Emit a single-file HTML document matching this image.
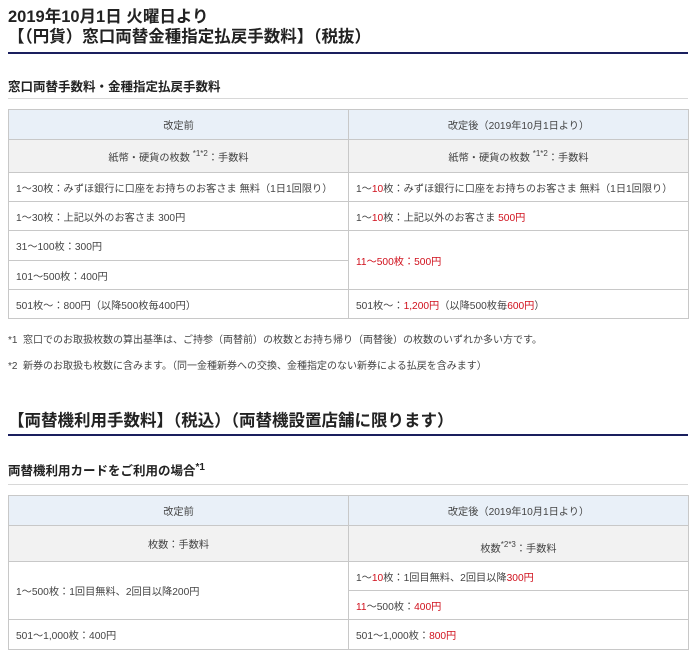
<!DOCTYPE html>
<html><head><meta charset="utf-8"><style>
*{margin:0;padding:0;box-sizing:border-box}
body{width:700px;height:664px;background:#fff;font-family:"Liberation Sans","Noto Sans CJK JP",sans-serif;color:#333;position:relative;overflow:hidden}
.a{position:absolute;white-space:nowrap}
.h1{font-size:16.5px;font-weight:bold;color:#222;left:8px}
.rule{position:absolute;left:8px;width:680px;height:2px;background:#1a1f5e}
.grey{position:absolute;left:8px;width:680px;height:1px;background:#d8d8d8}
.h2{font-size:12.5px;font-weight:bold;color:#222;left:8px}
table{position:absolute;left:8px;width:680px;border-collapse:collapse;font-size:10.2px;color:#444;table-layout:fixed}
td{border:1px solid #c8c8c8;padding:0 7px;vertical-align:middle;white-space:nowrap;overflow:hidden}
tr.hd td{background:#e9f0f8;text-align:center}
tr.sh td{background:#f2f2f2;text-align:center}
.r{color:#d0101c}
sup{font-size:8px;vertical-align:5px;line-height:0}
.fn{font-size:10px;color:#444;left:8px}
</style></head><body>
<div class="a h1" style="top:3px">2019年10月1日 火曜日より</div>
<div class="a h1" style="top:23px">【（円貨）窓口両替金種指定払戻手数料】（税抜）</div>
<div class="rule" style="top:52px"></div>
<div class="a h2" style="top:76px">窓口両替手数料・金種指定払戻手数料</div>
<div class="grey" style="top:98px"></div>
<table style="top:109px">
<colgroup><col style="width:340px"><col style="width:340px"></colgroup>
<tr class="hd" style="height:30px"><td>改定前</td><td>改定後（2019年10月1日より）</td></tr>
<tr class="sh" style="height:33px"><td>紙幣・硬貨の枚数 <sup>*1*2</sup>：手数料</td><td>紙幣・硬貨の枚数 <sup>*1*2</sup>：手数料</td></tr>
<tr style="height:29px"><td>1～30枚：みずほ銀行に口座をお持ちのお客さま 無料（1日1回限り）</td><td>1～<span class="r">10</span>枚：みずほ銀行に口座をお持ちのお客さま 無料（1日1回限り）</td></tr>
<tr style="height:29px"><td>1～30枚：上記以外のお客さま 300円</td><td>1～<span class="r">10</span>枚：上記以外のお客さま <span class="r">500円</span></td></tr>
<tr style="height:30px"><td>31～100枚：300円</td><td rowspan="2" class="r">11～500枚：500円</td></tr>
<tr style="height:29px"><td>101～500枚：400円</td></tr>
<tr style="height:29px"><td>501枚～：800円（以降500枚毎400円）</td><td>501枚～：<span class="r">1,200円</span>（以降500枚毎<span class="r">600円</span>）</td></tr>
</table>
<div class="a fn" style="top:331px">*1&nbsp; 窓口でのお取扱枚数の算出基準は、ご持参（両替前）の枚数とお持ち帰り（両替後）の枚数のいずれか多い方です。</div>
<div class="a fn" style="top:357px">*2&nbsp; 新券のお取扱も枚数に含みます。（同一金種新券への交換、金種指定のない新券による払戻を含みます）</div>
<div class="a h1" style="top:407px">【両替機利用手数料】（税込）（両替機設置店舗に限ります）</div>
<div class="rule" style="top:434px"></div>
<div class="a h2" style="top:460px">両替機利用カードをご利用の場合<sup style="font-size:10px">*1</sup></div>
<div class="grey" style="top:484px"></div>
<table style="top:495px">
<colgroup><col style="width:340px"><col style="width:340px"></colgroup>
<tr class="hd" style="height:30px"><td>改定前</td><td>改定後（2019年10月1日より）</td></tr>
<tr class="sh" style="height:36px"><td>枚数：手数料</td><td style="padding-top:8px">枚数<sup>*2*3</sup>：手数料</td></tr>
<tr style="height:29px"><td rowspan="2">1～500枚：1回目無料、2回目以降200円</td><td>1～<span class="r">10</span>枚：1回目無料、2回目以降<span class="r">300円</span></td></tr>
<tr style="height:29px"><td><span class="r">11</span>～500枚：<span class="r">400円</span></td></tr>
<tr style="height:30px"><td>501～1,000枚：400円</td><td>501～1,000枚：<span class="r">800円</span></td></tr>
</table>
</body></html>
